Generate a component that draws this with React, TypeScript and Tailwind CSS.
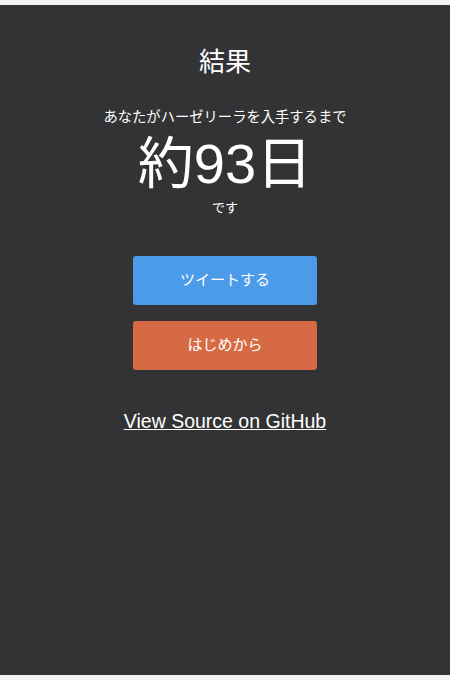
import React from "react";

export default function App() {
  const font = {
    fontFamily: '"Liberation Sans", "Noto Sans CJK JP", sans-serif',
  };
  return (
    <div className="w-[450px] h-[680px] bg-[#f4f4f4] pt-[5px]" style={font}>
      <div className="h-[670px] bg-[#333335] flex flex-col items-center text-white">
        <h1 className="mt-[39px] text-[26px] leading-[36px] font-normal">結果</h1>
        <p className="mt-[27px] text-[14.3px] leading-[20px]">あなたがハーゼリーラを入手するまで</p>
        <p className="mt-[7px] text-[56px] leading-[60px]">約93日</p>
        <p className="mt-[5px] text-[13px] leading-[18px]">です</p>
        <button className="mt-[39px] w-[184px] h-[49px] rounded-[3px] bg-[#4b9be9] text-white text-[15px]">
          ツイートする
        </button>
        <button className="mt-[16px] w-[184px] h-[49px] rounded-[3px] bg-[#d56a44] text-white text-[15px]">
          はじめから
        </button>
        <a className="mt-[39px] text-[19.5px] leading-[24px] underline text-white" href="#">
          View Source on GitHub
        </a>
      </div>
    </div>
  );
}
